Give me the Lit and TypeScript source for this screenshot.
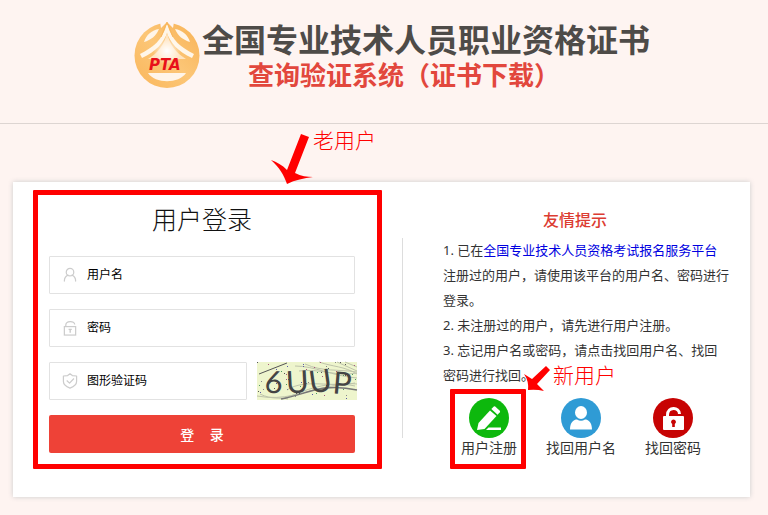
import { LitElement, html, css, svg } from "lit";
import { customElement } from "lit/decorators.js";

const specks = Array.from({ length: 60 }, (_, i) => ({
  x: (i * 37 + (i * i * 7) % 23) % 99,
  y: (i * 17 + (i * i * 3) % 19) % 37,
  c: ["#555", "#5a5aa8", "#a8567e", "#4d9a5c", "#888"][i % 5],
}));

const userIcon = svg`<g fill="none" stroke="#ccc" stroke-width="1.3" stroke-linecap="round">
  <circle cx="8" cy="5.5" r="4"/><path d="M2 15c0-4 2-5.500 4-6.300M10 8.700c2.200.8 4 2.400 4 6.300"/></g>`;
const lockIcon = svg`<g fill="none" stroke="#ccc" stroke-width="1.3">
  <rect x="2" y="7" width="12" height="9"/><path d="M3.500 7V5.500c0-5 9.500-5 9.500-.7"/>
  <path d="M6.500 10h3.400M8.200 10v3.500" stroke-width="1.500"/></g>`;
const shieldIcon = svg`<g fill="none" stroke="#ccc" stroke-width="1.300" stroke-linejoin="round">
  <path d="M8 .8 10.500 2.700 15 3.200V9c0 3.500-3 5.500-7 7-4-1.500-7-3.500-7-7V3.200L5.500 2.700Z"/><path d="m4.500 8 3 2.800 4.700-5"/></g>`;

@customElement("app-root")
export class AppRoot extends LitElement {
  static styles = css`
    :host {
      display: block;
      min-height: 100vh;
      box-sizing: border-box;
      background: #fef4f1;
      color: #333;
      font-family: "Noto Sans", "Noto Sans CJK SC", sans-serif;
    }
    * { box-sizing: border-box; }
    h1, h2, p { margin: 0; }
    a { text-decoration: none; }
    .header {
      display: flex;
      justify-content: center;
      gap: 2px;
      padding: 20px 0 31px 16px;
      border-bottom: 1px solid #ddd5d2;
    }
    .logo { flex: none; width: 66px; height: 66px; margin-top: 2px; }
    .logo-text { font: italic 700 15px "DejaVu Sans", sans-serif; fill: #e8101a; }
    .brand {
      font-family: "Noto Sans CJK SC", sans-serif;
      font-size: 32px;
      line-height: 36px;
      font-weight: 700;
      color: #4e4b48;
    }
    .brand-sub {
      display: block;
      padding-left: 46px;
      font-size: 26px;
      color: #e2473d;
    }
    .card {
      display: grid;
      grid-template-columns: 389fr 1px 347fr;
      margin: 58px 18px 16px 13px;
      padding: 8px 0 28px;
      background: #fff;
      box-shadow: 0 0 5px #ccc;
    }
    .login { position: relative; padding: 8px 47px 16px 36px; }
    .title {
      font-family: "Noto Sans CJK SC", sans-serif;
      font-size: 25px;
      line-height: 40px;
      font-weight: 300;
      text-align: center;
      color: #111;
    }
    .form { display: flex; flex-direction: column; gap: 15px; padding-top: 18px; }
    .field {
      display: flex;
      flex: 1;
      align-items: center;
      gap: 9px;
      min-width: 0;
      height: 38px;
      flex-basis: 38px;
      padding: 0 12px;
      border: 1px solid #e2e2e2;
      border-radius: 1px;
    }
    .field-icon { flex: none; width: 16px; height: 16px; }
    .input {
      flex: 1;
      min-width: 0;
      height: 24px;
      padding: 0 0 4px;
      border: 0;
      outline: 0;
      background: none;
      font: 12px "Noto Sans CJK SC", sans-serif;
      color: #000;
    }
    .input::placeholder { color: #000; opacity: 1; }
    .row { display: flex; gap: 10px; margin-right: -2px; }
    .captcha { flex: none; width: 100px; height: 38px; overflow: visible; }
    .captcha-text { font: 31px "Lato", sans-serif; fill: #444; }
    .submit {
      height: 38px;
      padding: 0;
      border: 0;
      border-radius: 2px;
      background: #ee4237;
      color: #fff;
      font: 500 14px "Noto Sans CJK SC", sans-serif;
      white-space: pre;
    }
    .mark {
      position: absolute;
      border: 5px solid #f00;
      border-radius: 1px;
      pointer-events: none;
    }
    .mark-login { inset: 0 20px 0 20px; }
    .mark-register { inset: -9px 9px -11px 7px; }
    .note {
      position: absolute;
      display: flex;
      align-items: flex-start;
      color: #f00;
      font: 300 21px/18px "Noto Sans CJK SC", sans-serif;
      white-space: nowrap;
      pointer-events: none;
    }
    .note-old { left: 258px; top: -60px; }
    .note-new { left: 81px; top: -33px; gap: 2px; }
    .arrow { flex: none; fill: #f00; }
    .divider { height: 200px; margin-top: 48px; background: #ddd; }
    .side { padding: 17px 21px 0 40px; }
    .side-title { font-size: 16px; line-height: 26px; font-weight: 500; text-align: center; color: #dc3c32; padding-right: 22px; }
    .tips { margin: 0; padding: 5px 0 0; list-style: none; font-size: 13px; line-height: 25px; }
    .tips-link { color: #0000e0; }
    .actions { display: grid; grid-template-columns: repeat(3, 1fr); margin: 10px 10px 0 0; }
    .action {
      position: relative;
      display: flex;
      flex-direction: column;
      align-items: center;
      color: #333;
      font-size: 14px;
      line-height: 20px;
    }
    .action-icon { width: 40px; height: 40px; }
  `;

  private field(label: string, icon: unknown, type = "text") {
    return html`<label class="field">
      <svg class="field-icon" viewBox="0 0 16 17" aria-hidden="true">${icon}</svg>
      <input class="input" type=${type} placeholder=${label} aria-label=${label} />
    </label>`;
  }

  render() {
    return html`
      <header class="header">
        <svg class="logo" viewBox="0 0 66 66" aria-hidden="true">
          <defs>
            <linearGradient id="gold" x1="0" y1="1" x2="1" y2="0">
              <stop offset="0" stop-color="#fab65b" /><stop offset=".5" stop-color="#fcc677" /><stop offset="1" stop-color="#f8b255" />
            </linearGradient>
            <radialGradient id="glow" cx=".5" cy=".5" r=".5">
              <stop offset="0" stop-color="#fff" /><stop offset="1" stop-color="#fff" stop-opacity="0" />
            </radialGradient>
          </defs>
          <circle cx="33" cy="33.500" r="32.500" fill="url(#gold)" />
          <path d="M26 0H40L39 6 33 0 27 6Z" fill="#fef4f1" />
          <path d="M25 7C18 8 12 13 10 20c7-2 12-6 15-13Z" fill="#fff5e9" />
          <path d="M41 7c7 1 13 6 15 13-7-2-12-6-15-13Z" fill="#fff5e9" />
          <path d="M32.500 3C28 19 19 25 6 32L8 36C22 30 30 20 33 11 36 20 44 30 58 36L60 32C47 25 38 19 33.500 3Z" fill="#fff6e9" />
          <path d="M33 10C31 22 24 31 14 37H52C42 31 35 22 33 10Z" fill="#ffe4c0" />
          <circle cx="33" cy="29" r="14" fill="url(#glow)" />
          <path d="M33 0 27 15M33 0 39 15" stroke="#f8b55c" stroke-width="1" fill="none" />
          <path d="M14 51h38c-7 11-31 11-38 0Z" fill="#fff5e9" />
          <text class="logo-text" x="15" y="48">PTA</text>
        </svg>
        <h1 class="brand">全国专业技术人员职业资格证书<span class="brand-sub">查询验证系统（证书下载）</span></h1>
      </header>

      <main class="card">
        <section class="login">
          <h2 class="title">用户登录</h2>
          <form class="form" @submit=${(e: Event) => e.preventDefault()}>
            ${this.field("用户名", userIcon)}
            ${this.field("密码", lockIcon, "password")}
            <div class="row">
              ${this.field("图形验证码", shieldIcon)}
              <svg class="captcha" viewBox="0 0 100 38" role="img" aria-label="验证码">
                <rect width="100" height="38" fill="#eef5cd" />
                <g fill="none" stroke="#bfc4ab" stroke-width="1">
                  <path d="M2 12 30 1" stroke="#555" />
                  <path d="M38 4C58 4 75 14 100 16M42 9c20-3 38 6 58 2M48 2c18 8 32 5 52 8M62 0c14 5 25 4 38 12M80 0l20 9M88 0l12 5" />
                  <path d="M0 34c28 5 45-4 65-8s25-5 35-4M3 32c12 6 20 3 28 5M30 28c18-12 45-2 68-7M25 37C50 28 70 18 98 24" />
                  <path d="M24 37c24-4 40-17 76-9" stroke="#777" stroke-width="1.500" />
                </g>
                ${specks.map((s) => svg`<rect x=${s.x} y=${s.y} width="1" height="1" fill=${s.c} />`)}
                <g class="captcha-text">
                  <text x="8" y="31" transform="rotate(5 17 20)">6</text>
                  <text x="29" y="31" transform="rotate(-3 41 20)">U</text>
                  <text x="52" y="30" transform="rotate(-8 63 20)">U</text>
                  <text x="76" y="32" transform="rotate(5 83 20)">P</text>
                </g>
              </svg>
            </div>
            <button class="submit" type="submit">登     录</button>
          </form>
          <div class="mark mark-login"></div>
          <div class="note note-old">
            <svg class="arrow" width="42" height="54" viewBox="0 0 42 54" aria-hidden="true">
              <path d="M30 4 38 7 24 43C30 46 36 47 42 47 33 48 24 50 16 54 13 45 8 37 0 30 6 32 11 35 16 40Z" />
            </svg>老用户
          </div>
        </section>

        <div class="divider"></div>

        <section class="side">
          <h2 class="side-title">友情提示</h2>
          <ol class="tips">
            <li>1. 已在<a class="tips-link" href="#">全国专业技术人员资格考试报名服务平台</a>注册过的用户，请使用该平台的用户名、密码进行登录。</li>
            <li>2. 未注册过的用户，请先进行用户注册。</li>
            <li>3. 忘记用户名或密码，请点击找回用户名、找回密码进行找回。</li>
          </ol>
          <nav class="actions">
            <a class="action" href="#">
              <svg class="action-icon" viewBox="0 0 40 40" aria-hidden="true">
                <circle cx="20" cy="20" r="20" fill="#0db80d" />
                <path d="M21 12.500 27.500 18 15.500 31 8 32 9.500 25Z" fill="#fff" />
                <path d="M22.300 11 24.800 8.500Q25.500 8 26.200 8.600L30.800 12.700Q31.500 13.500 30.800 14.300L28.600 16.700Z" fill="#fff" />
                <path d="M19.500 29.500H32V32H17Z" fill="#fff" />
              </svg>
              用户注册
              <div class="mark mark-register"></div>
              <div class="note note-new">
                <svg class="arrow" width="27" height="26" viewBox="0 0 27 26" aria-hidden="true">
                  <path d="M22 1 26 5 13 19 20 26Q12 24 4 25 5 16 0 9L8 14Z" />
                </svg>新用户
              </div>
            </a>
            <a class="action" href="#">
              <svg class="action-icon" viewBox="0 0 40 40" aria-hidden="true">
                <circle cx="20" cy="20" r="20" fill="#2f9bd5" />
                <ellipse cx="20" cy="14.500" rx="6" ry="6.500" fill="#fff" />
                <path d="M9 31.500C9 24 13 21.500 16 21.500q4 2.500 8 0c3 0 7 2.500 7 10Z" fill="#fff" />
              </svg>
              找回用户名
            </a>
            <a class="action" href="#">
              <svg class="action-icon" viewBox="0 0 40 40" aria-hidden="true">
                <circle cx="20" cy="20" r="20" fill="#c70303" />
                <path d="M14.500 18v-1c0-8.500 12-8.500 12-1" fill="none" stroke="#fff" stroke-width="3" />
                <rect x="10" y="18" width="21" height="14" rx="1" fill="#fff" />
                <path d="M20.500 21.500a2.500 2.500 0 0 1 1.300 4.600V29h-2.600v-2.900a2.500 2.500 0 0 1 1.300-4.600Z" fill="#c70303" />
              </svg>
              找回密码
            </a>
          </nav>
        </section>
      </main>
    `;
  }
}
